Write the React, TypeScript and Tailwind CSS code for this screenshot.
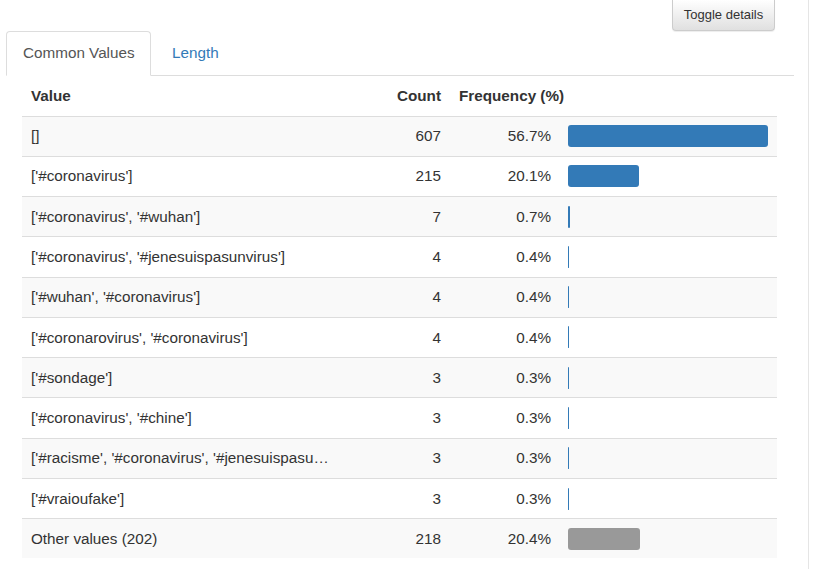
const rows = [
  { value: "[]", count: 607, pct: 56.7 },
  { value: "['#coronavirus']", count: 215, pct: 20.1 },
  { value: "['#coronavirus', '#wuhan']", count: 7, pct: 0.7 },
  { value: "['#coronavirus', '#jenesuispasunvirus']", count: 4, pct: 0.4 },
  { value: "['#wuhan', '#coronavirus']", count: 4, pct: 0.4 },
  { value: "['#coronarovirus', '#coronavirus']", count: 4, pct: 0.4 },
  { value: "['#sondage']", count: 3, pct: 0.3 },
  { value: "['#coronavirus', '#chine']", count: 3, pct: 0.3 },
  { value: "['#racisme', '#coronavirus', '#jenesuispasu…", count: 3, pct: 0.3 },
  { value: "['#vraioufake']", count: 3, pct: 0.3 },
];

const MAX_PCT = 56.7;
const BAR_MAX = 200;

const FreqRow = ({
  value,
  count,
  pct,
  striped,
  other,
}: {
  value: string;
  count: number;
  pct: number;
  striped: boolean;
  other?: boolean;
}) => (
  <div
    className={`grid h-[40.27px] grid-cols-[367px_60px_110px_218px] items-center border-t border-[#ddd] ${striped ? "bg-[#f9f9f9]" : "bg-white"}`}
  >
    <div className="truncate pl-[9px] pt-[1px]">{value}</div>
    <div className="pr-[8px] pt-[1px] text-right">{count}</div>
    <div className="pr-[8px] pt-[1px] text-right">{pct.toFixed(1)}%</div>
    <div className="pl-[9px]">
      <div
        className={`h-[22px] rounded-[3px] ${other ? "bg-[#999]" : "bg-[#337ab7]"}`}
        style={{ width: `${Math.max((pct / MAX_PCT) * BAR_MAX, 1)}px` }}
      />
    </div>
  </div>
);

export default function App() {
  return (
    <div className="h-[581px] w-[824px] bg-white font-['Liberation_Sans',Arial,sans-serif] text-[15.25px] text-[#333]">
      <div className="h-[569px] w-[809px] border-r border-[#e5e5e5]">
        {/* Toggle button */}
        <div className="flex justify-end pr-[33px]">
          <button className="h-[31px] w-[103px] rounded-b-[4px] border border-t-0 border-[#ccc] bg-gradient-to-b from-white to-[#e0e0e0] text-[13px] text-[#333] shadow-[0_1px_1px_rgba(0,0,0,0.075)]">
            Toggle details
          </button>
        </div>

        {/* Tabs */}
        <div className="ml-[6px] flex h-[45px] w-[788px] border-b border-[#ddd]">
          <div className="mb-[-1px] flex h-[45px] w-[145px] items-center rounded-t-[4px] border border-[#ddd] border-b-white bg-white pl-[16px] text-[#555]">
            Common Values
          </div>
          <div className="ml-[2px] flex h-[44px] items-center pl-[19px] text-[#337ab7]">
            Length
          </div>
        </div>

        {/* Table */}
        <div className="ml-[22px] w-[755px]">
          <div className="grid h-[39.5px] grid-cols-[367px_60px_110px_218px] items-center pt-[2px] font-bold">
            <div className="pl-[9px]">Value</div>
            <div className="pr-[8px] text-right">Count</div>
            <div className="whitespace-nowrap pl-[10px]">Frequency (%)</div>
            <div />
          </div>
          {rows.map((r, i) => (
            <FreqRow key={i} {...r} striped={i % 2 === 0} />
          ))}
          <FreqRow value="Other values (202)" count={218} pct={20.4} striped other />
        </div>
      </div>
    </div>
  );
}
